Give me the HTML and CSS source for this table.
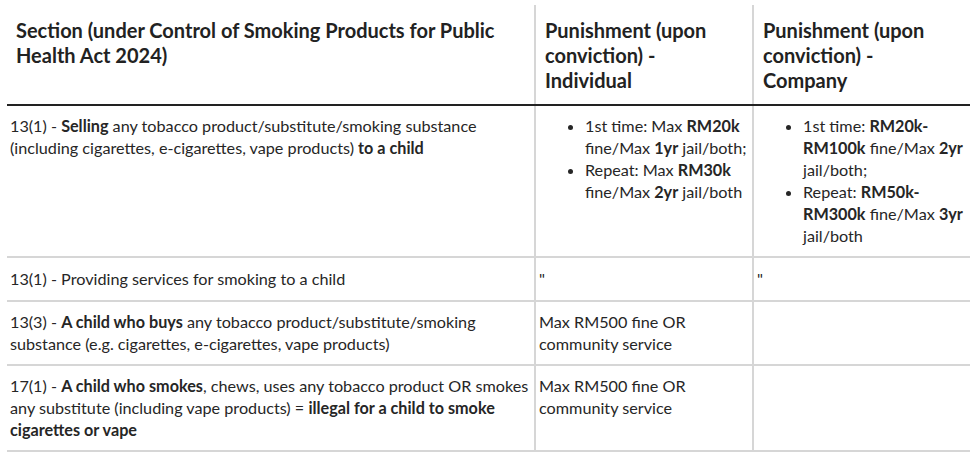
FILE: index.html
```html
<!DOCTYPE html>
<html lang="en">
<head>
<meta charset="utf-8">
<title>Smoking Products Act 2024 - Punishments</title>
<link rel="stylesheet" href="styles.css">
</head>
<body>
<div class="wrap">
<table class="law">
  <colgroup>
    <col class="c1">
    <col class="c2">
    <col class="c3">
  </colgroup>
  <thead>
    <tr>
      <th>Section (under Control of Smoking Products for Public Health Act 2024)</th>
      <th>Punishment (upon conviction) - Individual</th>
      <th>Punishment (upon conviction) - Company</th>
    </tr>
  </thead>
  <tbody>
    <tr>
      <td>13(1) - <b>Selling</b> any tobacco product/substitute/smoking substance (including cigarettes, e-cigarettes, vape products) <b>to a child</b></td>
      <td>
        <ul>
          <li>1st time: Max <b>RM20k</b> fine/Max <b>1yr</b> jail/both;</li>
          <li>Repeat: Max <b>RM30k</b> fine/Max <b>2yr</b> jail/both</li>
        </ul>
      </td>
      <td>
        <ul>
          <li>1st time: <b>RM20k-RM100k</b> fine/Max <b>2yr</b> jail/both;</li>
          <li>Repeat: <b>RM50k-RM300k</b> fine/Max <b>3yr</b> jail/both</li>
        </ul>
      </td>
    </tr>
    <tr class="short">
      <td>13(1) - Providing services for smoking to a child</td>
      <td>"</td>
      <td>"</td>
    </tr>
    <tr>
      <td>13(3) - <b>A child who buys</b> any tobacco product/substitute/smoking substance (e.g. cigarettes, e-cigarettes, vape products)</td>
      <td>Max RM500 fine OR community service</td>
      <td></td>
    </tr>
    <tr>
      <td>17(1) - <b>A child who smokes</b>, chews, uses any tobacco product OR smokes any substitute (including vape products) = <b>illegal for a child to smoke cigarettes or vape</b></td>
      <td>Max RM500 fine OR community service</td>
      <td></td>
    </tr>
  </tbody>
</table>
</div>
</body>
</html>
```
FILE: styles.css
```css
html, body {
  margin: 0;
  padding: 0;
  background: #ffffff;
}

body {
  font-family: Lato, "Liberation Sans", sans-serif;
  color: #262626;
}

.wrap {
  padding: 5px 10px 0 7px;
}

.law {
  width: 963px;
  border-collapse: collapse;
  table-layout: fixed;
}

.c1 { width: 528px; }
.c2 { width: 218px; }
.c3 { width: 217px; }

.law th {
  text-align: left;
  vertical-align: top;
  font-weight: 700;
  font-size: 20px;
  line-height: 25px;
  padding: 13px 24px 11px 9px;
  border-bottom: 2px solid #222222;
  color: #222222;
}

.law th + th,
.law td + td {
  border-left: 2px solid #d6d6d6;
}

.law td {
  vertical-align: top;
  font-size: 16.2px;
  line-height: 22px;
  padding: 9px 0 9px 3px;
  border-bottom: 2px solid #d6d6d6;
}

.law .short td {
  padding-top: 10px;
  padding-bottom: 10px;
}

.law b {
  font-weight: 700;
}

.law ul {
  margin: 0;
  padding-left: 46px;
}
```
